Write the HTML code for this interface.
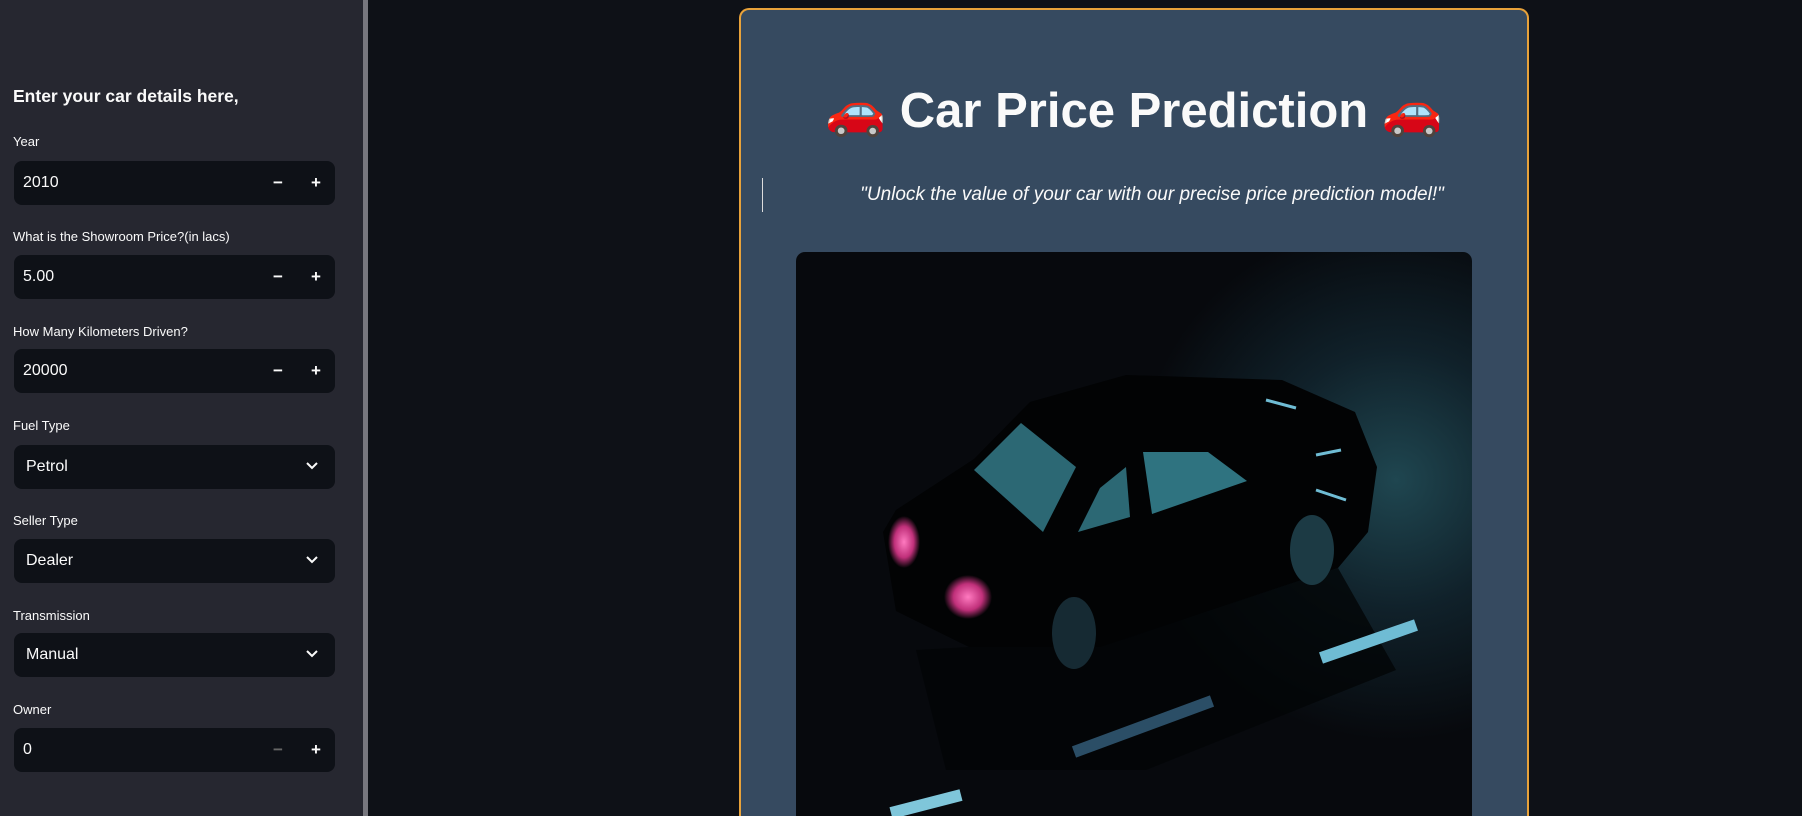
<!DOCTYPE html>
<html><head><meta charset="utf-8"><style>
*{margin:0;padding:0;box-sizing:border-box}
html,body{width:1802px;height:816px;overflow:hidden}
body{background:#0e1117;font-family:"Liberation Sans",sans-serif;color:#fafafa;position:relative}
.sb{position:absolute;left:0;top:0;width:363px;height:816px;background:#262730}
.div{position:absolute;left:363px;top:0;width:5px;height:816px;background:#77777e}
.h{position:absolute;left:13px;top:86px;font-size:17.5px;font-weight:bold}
.lab{position:absolute;left:13px;font-size:13px}
.in{position:absolute;left:14px;width:321px;height:44px;background:#0e1117;border-radius:8px;font-size:16px;line-height:44px;padding-left:9px}
.in.s{padding-left:12px}
.pm{position:absolute;top:0;font-weight:bold;font-size:17px}
.card{position:absolute;left:739px;top:8px;width:790px;height:808px;background:#364a60;border:2px solid #e8a23a;border-bottom:none;border-radius:10px 10px 0 0;overflow:hidden}
.title{position:absolute;left:0;right:0;top:72px;text-align:center;font-size:49px;font-weight:bold;white-space:nowrap}
.q{position:absolute;left:0;right:0;top:174px;text-align:center;font-size:19px;font-style:italic;padding-left:36px;white-space:nowrap}
.bar{position:absolute;left:762px;top:178px;width:1px;height:34px;background:#ddd}
</style></head><body>
<div class="sb">
<div class="h">Enter your car details here,</div>
<div class="lab" style="top:134px">Year</div>
<div class="in" style="top:161px">2010<span class="pm" style="left:259px">−</span><span class="pm" style="left:297px">+</span></div>
<div class="lab" style="top:229px">What is the Showroom Price?(in lacs)</div>
<div class="in" style="top:255px">5.00<span class="pm" style="left:259px">−</span><span class="pm" style="left:297px">+</span></div>
<div class="lab" style="top:324px">How Many Kilometers Driven?</div>
<div class="in" style="top:349px">20000<span class="pm" style="left:259px">−</span><span class="pm" style="left:297px">+</span></div>
<div class="lab" style="top:418px">Fuel Type</div>
<div class="in s" style="top:445px">Petrol<svg style="position:absolute;left:292px;top:16px" width="12" height="10" viewBox="0 0 12 10"><path d="M1 2l5 5 5-5" stroke="#fafafa" stroke-width="2" fill="none"/></svg></div>
<div class="lab" style="top:513px">Seller Type</div>
<div class="in s" style="top:539px">Dealer<svg style="position:absolute;left:292px;top:16px" width="12" height="10" viewBox="0 0 12 10"><path d="M1 2l5 5 5-5" stroke="#fafafa" stroke-width="2" fill="none"/></svg></div>
<div class="lab" style="top:608px">Transmission</div>
<div class="in s" style="top:633px">Manual<svg style="position:absolute;left:292px;top:16px" width="12" height="10" viewBox="0 0 12 10"><path d="M1 2l5 5 5-5" stroke="#fafafa" stroke-width="2" fill="none"/></svg></div>
<div class="lab" style="top:702px">Owner</div>
<div class="in" style="top:728px">0<span class="pm" style="left:259px;color:#666">−</span><span class="pm" style="left:297px">+</span></div>
</div>
<div class="div"></div>
<div class="card">
<div class="title">🚗 Car Price Prediction 🚗</div>
<div class="q">"Unlock the value of your car with our precise price prediction model!"</div>
</div>
<div class="bar"></div>
<svg style="position:absolute;left:796px;top:252px" width="676" height="564" viewBox="0 2 676 564">
<defs>
<radialGradient id="g" cx="600" cy="230" r="260" gradientUnits="userSpaceOnUse"><stop offset="0" stop-color="#1f4650"/><stop offset="0.5" stop-color="#10212a"/><stop offset="1" stop-color="#07090d"/></radialGradient>
<radialGradient id="p" cx="0.5" cy="0.5" r="0.5"><stop offset="0" stop-color="#ff7ac0"/><stop offset="0.6" stop-color="#c0307a"/><stop offset="1" stop-color="#c0307a" stop-opacity="0"/></radialGradient>
</defs>
<rect x="0" y="2" width="676" height="580" rx="9" fill="url(#g)"/>
<path d="M120 400L173 397L304 397L542 318L600 420L350 520L150 520Z" fill="#030506" opacity="0.8"/>
<path d="M178 209L234 152L330 125L486 130L559 162L581 217L572 282L542 318L304 397L173 397L100 361L87 282L100 260Z" fill="#020304"/>
<path d="M178 220L225 173L280 217L247 282Z" fill="#2c6874"/>
<path d="M282 282L304 238L330 217L334 267Z" fill="#2c6874"/>
<path d="M347 202L412 202L451 231L356 264Z" fill="#2f7380"/>
<ellipse cx="108" cy="292" rx="16" ry="26" fill="url(#p)"/>
<ellipse cx="172" cy="347" rx="24" ry="22" fill="url(#p)"/>
<ellipse cx="278" cy="383" rx="22" ry="36" fill="#162a33"/>
<ellipse cx="516" cy="300" rx="22" ry="35" fill="#1c3a44"/>
<path d="M525 408L620 375" stroke="#6fbcd4" stroke-width="12"/>
<path d="M278 502L416 451" stroke="#2b4e66" stroke-width="12"/>
<path d="M95 563L165 545" stroke="#7fc6da" stroke-width="12"/>
<path d="M470 150l30 8M520 205l25 -5M520 240l30 10" stroke="#6fbcd4" stroke-width="3"/>
</svg>
</body></html>
